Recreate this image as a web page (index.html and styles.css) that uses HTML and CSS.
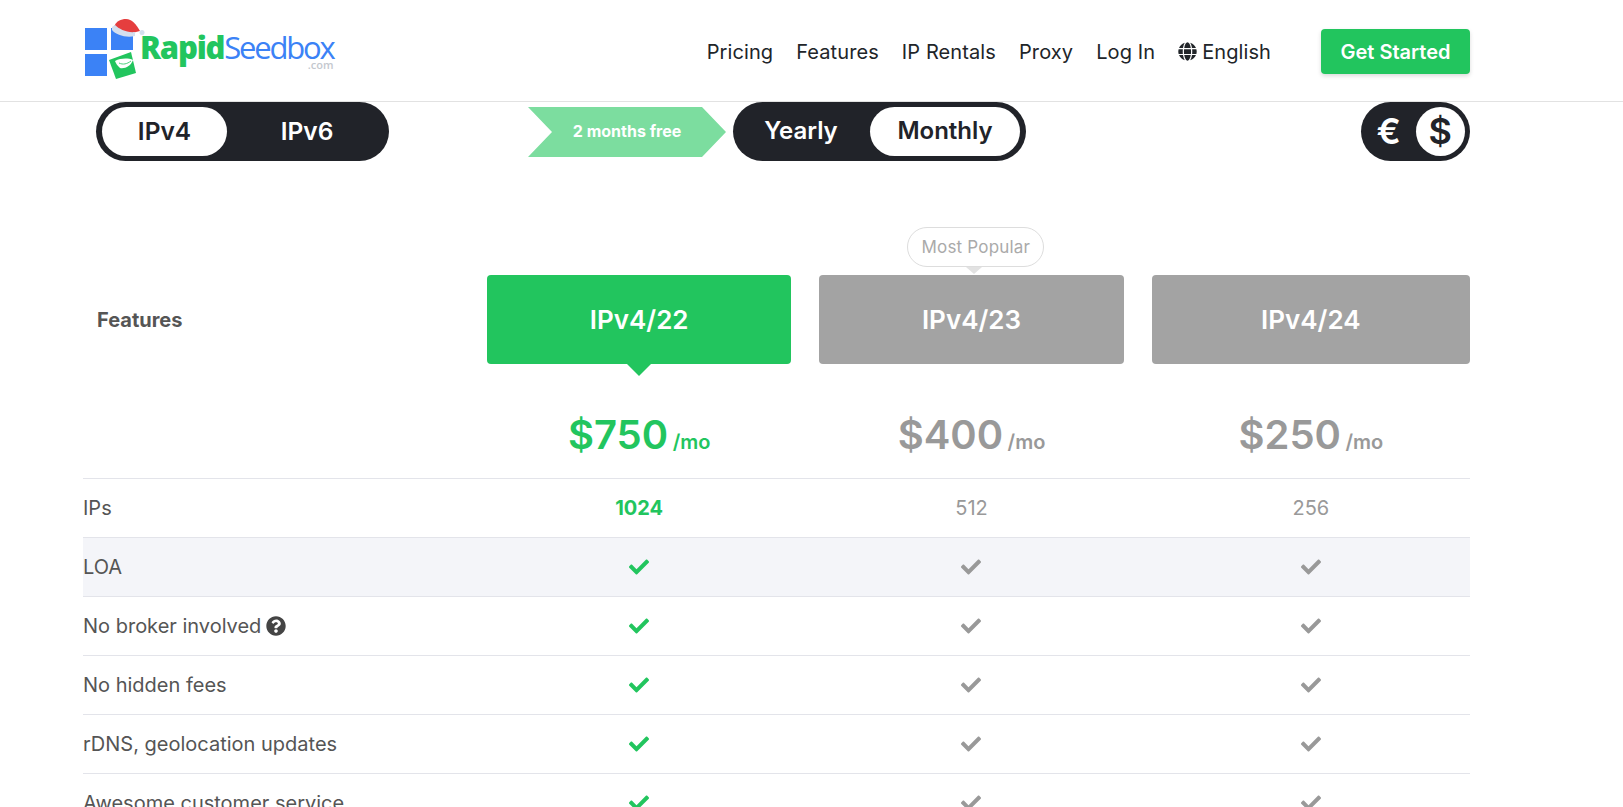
FILE: index.html
```html
<!DOCTYPE html>
<html lang="en">
<head>
    <meta charset="UTF-8">
    <meta name="viewport" content="width=device-width, initial-scale=1.0">
    <title>IPv4 Rentals Pricing</title>
    <link rel="stylesheet" href="styles.css">
</head>
<body>
    <svg class="icon-defs" aria-hidden="true">
        <symbol id="check" viewBox="0 0 512 512"><path d="M173.898 439.404l-166.4-166.4c-9.997-9.997-9.997-26.206 0-36.204l36.203-36.204c9.997-9.998 26.207-9.998 36.204 0L192 312.69 432.095 72.596c9.997-9.997 26.207-9.997 36.204 0l36.203 36.204c9.997 9.997 9.997 26.206 0 36.204l-294.4 294.401c-9.998 9.997-26.207 9.997-36.204-.001z"/></symbol>
    </svg>

    <div class="header">
        <a class="logo" href="#">
            <svg class="logo-mark" viewBox="0 0 66 66">
                <rect x="5" y="14" width="22" height="22" fill="#3b82f6"/>
                <rect x="31" y="14" width="22" height="22" fill="#3b82f6"/>
                <rect x="5" y="40" width="22" height="22" fill="#3b82f6"/>
                <path d="M29 46L51 38L56 59L36 65Z" fill="#22c55e"/>
                <path d="M35 47C41 44 48 44 53 46C51 52 45 55 40 54C38 52 36 50 35 47Z" fill="#fff"/>
                <path d="M39 49C43 51 47 50 51 47" fill="none" stroke="#22c55e" stroke-width="0.800"/>
                <path d="M34 13C36 7 41 5 46 5C52 5 56 10 60 17L52 19C46 20 38 17 34 13Z" fill="#e53e3e"/>
                <path d="M32 13L35 11C39 15 47 19 55 18L55 22C46 24 36 21 32 16Z" fill="#d4dfee"/>
                <circle cx="62" cy="18.500" r="2.500" fill="#d4dfee"/>
            </svg>
            <span class="logo-text">
                <span class="logo-name"><b>Rapid</b>Seedbox</span>
                <span class="logo-com">.com</span>
            </span>
        </a>
        <div class="nav">
            <a href="#">Pricing</a>
            <a href="#">Features</a>
            <a href="#">IP Rentals</a>
            <a href="#">Proxy</a>
            <a href="#">Log In</a>
            <a class="lang" href="#">
                <svg class="globe" viewBox="0 0 496 512"><path d="M336.500 160C322 70.700 287.800 8 248 8s-74 62.700-88.500 152h177zM152 256c0 22.200 1.200 43.500 3.300 64h185.300c2.100-20.500 3.300-41.800 3.300-64s-1.200-43.500-3.300-64H155.300c-2.100 20.500-3.300 41.800-3.300 64zm324.700-96c-28.600-67.900-86.500-120.400-158-141.600 24.400 33.800 41.200 84.700 50 141.600h108zM177.200 18.400C105.800 39.600 47.800 92.100 19.300 160h108c8.700-56.900 25.500-107.800 49.900-141.600zM487.400 192H372.700c2.100 21 3.300 42.500 3.300 64s-1.200 43-3.300 64h114.600c5.500-20.500 8.600-41.800 8.600-64s-3.100-43.500-8.500-64zM120 256c0-21.500 1.200-43 3.300-64H8.600C3.200 212.500 0 233.800 0 256s3.200 43.500 8.600 64h114.600c-2-21-3.200-42.500-3.200-64zm39.500 96c14.500 89.300 48.700 152 88.500 152s74-62.700 88.500-152h-177zm159.300 141.600c71.400-21.200 129.400-73.700 158-141.600h-108c-8.800 56.900-25.600 107.800-50 141.600zM19.300 352c28.600 67.900 86.500 120.400 158 141.600-24.400-33.800-41.200-84.700-50-141.600h-108z"/></svg>
                English
            </a>
            <button class="start-btn">Get Started</button>
        </div>
    </div>

    <div class="container">
        <div class="switches">
            <div class="toggle toggle-ip">
                <span class="toggle-item active">IPv4</span>
                <span class="toggle-item">IPv6</span>
            </div>
            <div class="billing">
                <div class="free-tag">2 months free</div>
                <div class="toggle toggle-billing">
                    <span class="toggle-item">Yearly</span>
                    <span class="toggle-item active">Monthly</span>
                </div>
            </div>
            <div class="toggle toggle-currency">
                <span class="toggle-item">€</span>
                <span class="toggle-item active">$</span>
            </div>
        </div>

        <div class="plans">
            <div class="plans-title">Features</div>
            <div class="plan-cell">
                <div class="plan-card selected">IPv4/22</div>
            </div>
            <div class="plan-cell">
                <div class="popular">Most Popular</div>
                <div class="plan-card">IPv4/23</div>
            </div>
            <div class="plan-cell">
                <div class="plan-card">IPv4/24</div>
            </div>
        </div>

        <div class="prices">
            <div></div>
            <div class="price selected"><strong>$750</strong> <span>/mo</span></div>
            <div class="price"><strong>$400</strong> <span>/mo</span></div>
            <div class="price"><strong>$250</strong> <span>/mo</span></div>
        </div>

        <div class="row">
            <div class="row-label">IPs</div>
            <div class="row-value selected"><b>1024</b></div>
            <div class="row-value">512</div>
            <div class="row-value">256</div>
        </div>
        <div class="row shaded">
            <div class="row-label">LOA</div>
            <div class="row-value selected"><svg class="check"><use href="#check"/></svg></div>
            <div class="row-value"><svg class="check"><use href="#check"/></svg></div>
            <div class="row-value"><svg class="check"><use href="#check"/></svg></div>
        </div>
        <div class="row">
            <div class="row-label">No broker involved
                <svg class="help" viewBox="0 0 512 512"><path d="M504 256c0 136.997-111.043 248-248 248S8 392.997 8 256C8 119.083 119.043 8 256 8s248 111.083 248 248zM262.655 90c-54.497 0-89.255 22.957-116.549 63.758-3.536 5.286-2.353 12.415 2.715 16.258l34.699 26.31c5.205 3.947 12.621 3.008 16.665-2.122 17.864-22.658 30.113-35.797 57.303-35.797 20.429 0 45.698 13.148 45.698 32.958 0 14.976-12.363 22.667-32.534 33.976C247.128 238.528 216 254.941 216 296v4c0 6.627 5.373 12 12 12h56c6.627 0 12-5.373 12-12v-1.333c0-28.462 83.186-29.647 83.186-106.667 0-58.002-60.165-102-116.531-102zM256 338c-25.365 0-46 20.635-46 46 0 25.364 20.635 46 46 46s46-20.636 46-46c0-25.365-20.635-46-46-46z"/></svg>
            </div>
            <div class="row-value selected"><svg class="check"><use href="#check"/></svg></div>
            <div class="row-value"><svg class="check"><use href="#check"/></svg></div>
            <div class="row-value"><svg class="check"><use href="#check"/></svg></div>
        </div>
        <div class="row">
            <div class="row-label">No hidden fees</div>
            <div class="row-value selected"><svg class="check"><use href="#check"/></svg></div>
            <div class="row-value"><svg class="check"><use href="#check"/></svg></div>
            <div class="row-value"><svg class="check"><use href="#check"/></svg></div>
        </div>
        <div class="row">
            <div class="row-label">rDNS, geolocation updates</div>
            <div class="row-value selected"><svg class="check"><use href="#check"/></svg></div>
            <div class="row-value"><svg class="check"><use href="#check"/></svg></div>
            <div class="row-value"><svg class="check"><use href="#check"/></svg></div>
        </div>
        <div class="row">
            <div class="row-label">Awesome customer service</div>
            <div class="row-value selected"><svg class="check"><use href="#check"/></svg></div>
            <div class="row-value"><svg class="check"><use href="#check"/></svg></div>
            <div class="row-value"><svg class="check"><use href="#check"/></svg></div>
        </div>
    </div>
</body>
</html>
```

FILE: styles.css
```css
html, body {
    height: 807px;
    overflow: hidden;
}
body {
    font-family: Inter, "Liberation Sans", sans-serif;
    margin: 0;
    padding: 0;
    background-color: #fff;
    color: #555;
}
a {
    color: inherit;
    text-decoration: none;
}
.icon-defs {
    display: none;
}
.header {
    height: 101px;
    padding: 0 153px 0 80px;
    border-bottom: 1px solid #e2e2e2;
    display: flex;
    justify-content: space-between;
    align-items: center;
}
.logo {
    display: flex;
    align-items: flex-start;
    align-self: flex-start;
    margin-top: 14px;
}
.logo-mark {
    width: 66px;
    height: 66px;
}
.logo-text {
    display: flex;
    flex-direction: column;
    align-items: flex-end;
    margin: 17px 0 0 -6px;
}
.logo-name {
    font-family: "Open Sans", sans-serif;
    font-size: 31px;
    line-height: 33px;
    letter-spacing: -2.2px;
    color: #3b82f6;
}
.logo-name b {
    color: #22c55e;
    font-weight: 800;
    letter-spacing: -1.2px;
}
.logo-com {
    font-family: "Open Sans", sans-serif;
    font-size: 11px;
    font-weight: 600;
    line-height: 9px;
    margin-top: -4px;
    color: #c4c8ce;
}
.nav {
    display: flex;
    align-items: center;
    gap: 23px;
    padding-top: 4px;
    font-size: 20px;
    letter-spacing: 0.1px;
    color: #212529;
}
.nav a {
    margin-top: -2px;
}
.lang {
    display: flex;
    align-items: center;
    gap: 5px;
}
.globe {
    width: 19px;
    height: 19px;
    fill: #212529;
}
.start-btn {
    font-family: inherit;
    font-size: 20px;
    font-weight: 600;
    color: #fff;
    background-color: #22c55e;
    border: none;
    border-radius: 4px;
    width: 149px;
    height: 45px;
    margin: -2px 0 0 27px;
    box-shadow: 0 2px 4px rgba(0, 0, 0, 0.15);
}
.container {
    width: 1387px;
    margin-left: 83px;
}
.switches {
    display: flex;
    align-items: flex-start;
    padding-left: 13px;
    height: 173px;
}
.toggle {
    display: flex;
    background-color: #212329;
    border-radius: 30px;
    padding: 5px;
    height: 49px;
    font-size: 24px;
    font-weight: 600;
    color: #fff;
}
.toggle-item {
    display: flex;
    align-items: center;
    justify-content: center;
    padding-bottom: 2px;
    box-sizing: border-box;
    border-radius: 25px;
}
.toggle-item.active {
    background-color: #fff;
    color: #212329;
}
.toggle-ip {
    width: 282px;
    padding-left: 6px;
    font-size: 24.5px;
}
.toggle-ip .toggle-item {
    width: 125px;
}
.toggle-ip .toggle-item + .toggle-item {
    width: 157px;
    padding-left: 3px;
}
.billing {
    display: flex;
    align-items: flex-start;
    margin-left: 139px;
}
.free-tag {
    width: 198px;
    height: 50px;
    margin: 5px 7px 0 0;
    box-sizing: border-box;
    display: flex;
    align-items: center;
    justify-content: center;
    padding-bottom: 2px;
    font-size: 16px;
    font-weight: 700;
    color: #fff;
    background-color: #7cdd9f;
    clip-path: polygon(0 0, 174px 0, 100% 50%, 174px 100%, 0 100%, 24px 50%);
}
.toggle-billing {
    width: 283px;
}
.toggle-billing .toggle-item {
    width: 132px;
    padding-right: 6px;
}
.toggle-billing .toggle-item.active {
    width: 150px;
    padding-right: 0;
}
.toggle-currency {
    margin-left: auto;
    width: 99px;
    font-size: 36px;
}
.toggle-currency .toggle-item {
    width: 50px;
    padding-right: 4px;
}
.toggle-currency .toggle-item.active {
    padding-right: 0;
}
.plans, .prices, .row {
    display: grid;
    grid-template-columns: 390px 1fr 1fr 1fr;
}
.plans-title {
    align-self: center;
    padding-left: 14px;
    font-size: 20px;
    font-weight: 700;
}
.plan-cell {
    position: relative;
    padding: 0 14px;
}
.plan-cell:last-child {
    padding-right: 0;
}
.plan-card {
    height: 89px;
    display: flex;
    align-items: center;
    justify-content: center;
    background-color: #a3a3a3;
    border-radius: 4px;
    color: #fff;
    font-size: 26px;
    font-weight: 600;
}
.plan-card.selected {
    position: relative;
    background-color: #22c55e;
}
.plan-card.selected::after {
    content: "";
    position: absolute;
    left: 50%;
    bottom: -12px;
    margin-left: -12px;
    border-top: 12px solid #22c55e;
    border-left: 12px solid transparent;
    border-right: 12px solid transparent;
}
.popular {
    position: absolute;
    top: -48px;
    left: 102px;
    width: 137px;
    height: 40px;
    box-sizing: border-box;
    display: flex;
    align-items: center;
    justify-content: center;
    border: 1px solid #ddd;
    border-radius: 20px;
    background-color: #fff;
    color: #aaa;
    font-size: 17px;
    letter-spacing: 0.2px;
}
.popular::after {
    content: "";
    position: absolute;
    left: 58px;
    bottom: -8px;
    border-top: 7px solid #e2e2e2;
    border-left: 8px solid transparent;
    border-right: 8px solid transparent;
}
.prices {
    height: 114px;
    box-sizing: border-box;
    padding-top: 42px;
}
.price {
    text-align: center;
    color: #999;
    line-height: 58px;
}
.price:last-child {
    padding-left: 14px;
}
.price strong {
    font-size: 40px;
    font-weight: 600;
}
.price span {
    font-size: 20px;
    font-weight: 600;
}
.price.selected {
    color: #22c55e;
}
.row {
    height: 58px;
    align-items: center;
    border-top: 1px solid #e3e4ea;
    font-size: 20px;
}
.row.shaded {
    background-color: #f4f5f9;
}
.row-label {
    display: flex;
    align-items: center;
    gap: 5px;
}
.row-value {
    display: flex;
    justify-content: center;
    color: #999;
}
.row-value:last-child {
    padding-left: 14px;
}
.row-value.selected {
    color: #22c55e;
}
.row-value b {
    font-weight: 700;
}
.check {
    width: 20px;
    height: 20px;
    fill: currentColor;
}
.help {
    width: 20px;
    height: 20px;
    fill: #444;
}
```
